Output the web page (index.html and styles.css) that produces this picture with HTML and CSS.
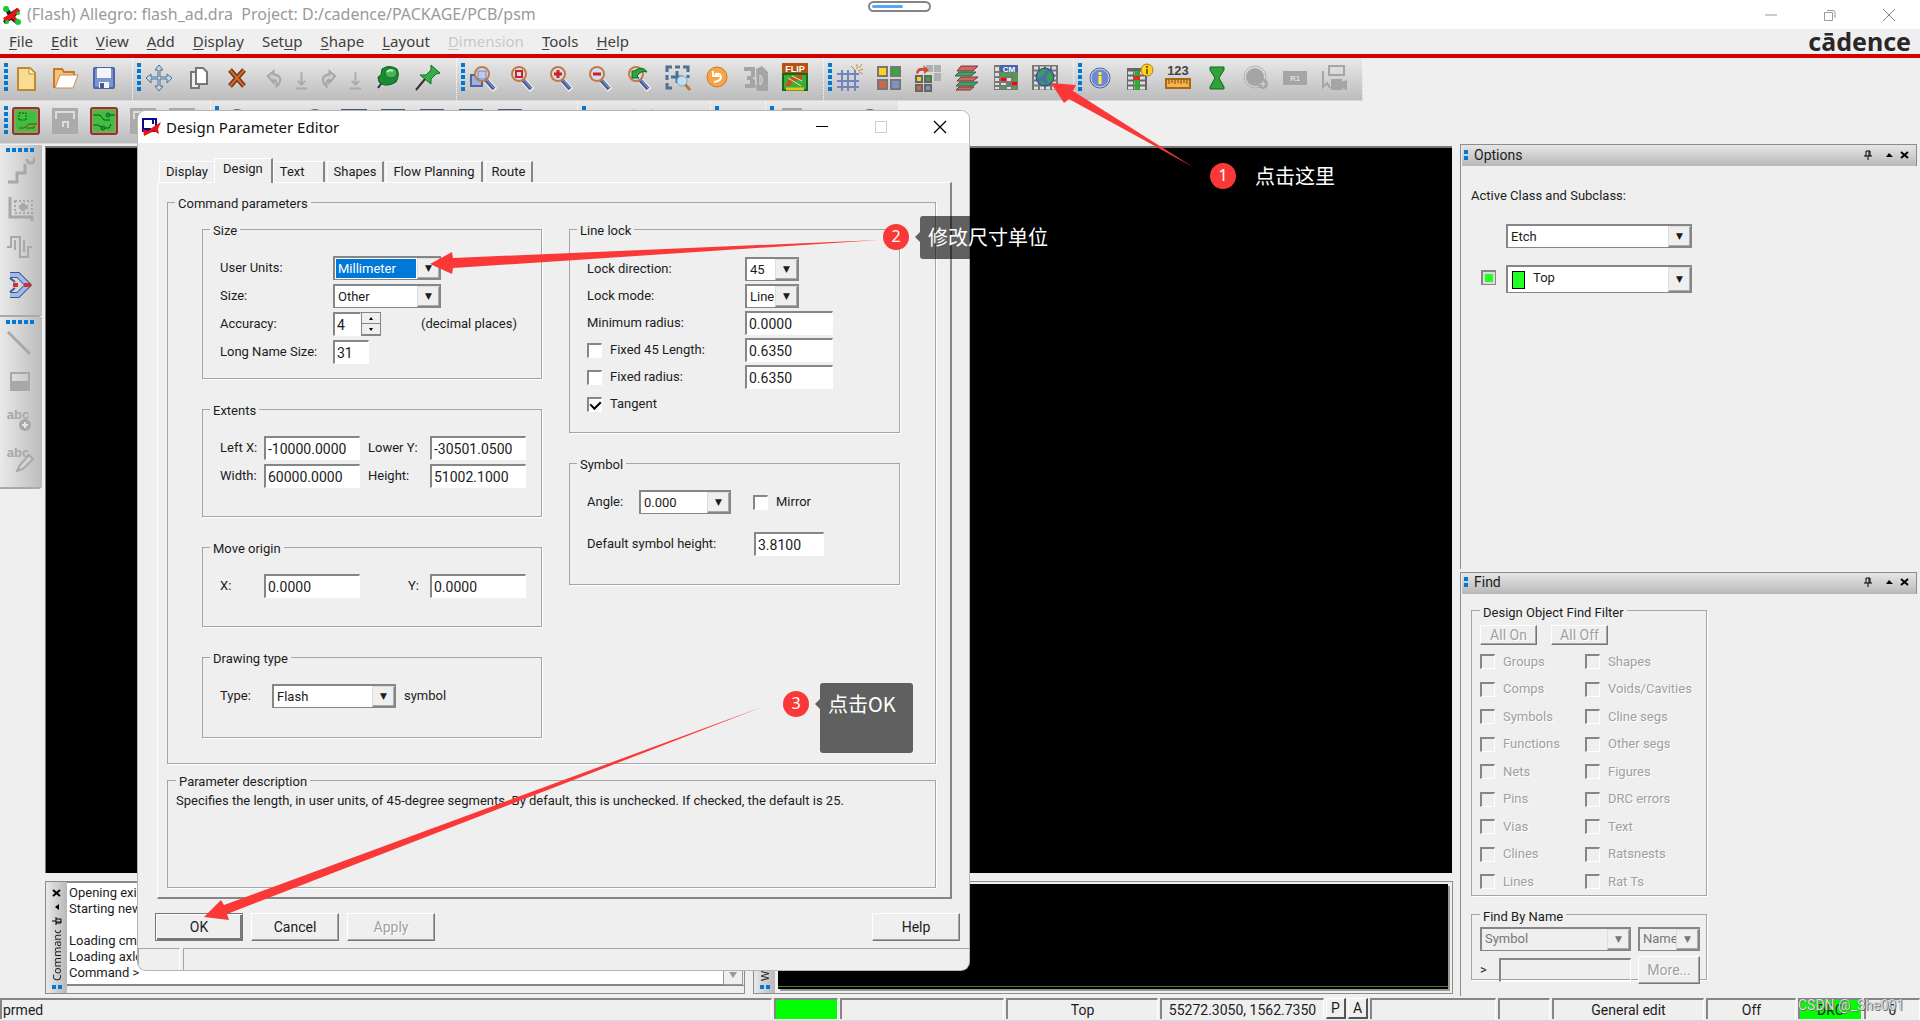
FILE: index.html
```html
<!DOCTYPE html>
<html lang="en">
<head>
<meta charset="utf-8">
<title>Allegro: flash_ad.dra</title>
<link rel="stylesheet" href="styles.css">
</head>
<body>
<svg class="defs" aria-hidden="true">
  <symbol id="lens" viewBox="0 0 30 30"><path d="M17 18l8 9" stroke="#f4f4f4" stroke-width="6"/><path d="M16 17l8 9" stroke="#4c5f94" stroke-width="4"/><path d="M17 17l7 8" stroke="#8fa3d6" stroke-width="1"/><circle cx="12" cy="11" r="7" fill="#d3dcf2" stroke="#c57a43" stroke-width="2"/></symbol>
  <symbol id="pin" viewBox="0 0 10 10"><path d="M3 1h4v5M3 1v5M1 6h8M5 6v4M6 1v5" fill="none" stroke="#000"/></symbol>
  <symbol id="x" viewBox="0 0 10 10"><path d="M1 2l7 6M8 2l-7 6" stroke="#000" stroke-width="2"/></symbol>
  <symbol id="disk" viewBox="0 0 30 30"><path d="M2 2h26v26H2z" fill="#ababab"/><path d="M6 13V6h18v7M13 21v-5h5v6" fill="none" stroke="#dcdcdc" stroke-width="2"/></symbol>
  <symbol id="board" viewBox="0 0 30 30"><rect x="2" y="2" width="26" height="26" rx="2" fill="#3fbf3f" stroke="#8f3535" stroke-width="2"/><rect x="4" y="4" width="22" height="22" fill="none" stroke="#e07a70"/></symbol>
  <symbol id="bluebar" viewBox="0 0 30 30"><path d="M4 7h22v16H4z" fill="#7f93c9" stroke="#44588f" stroke-width="2"/></symbol>
  <symbol id="graybar" viewBox="0 0 30 30"><path d="M6 6h18v18H6z" fill="none" stroke="#a5a5a5" stroke-width="2"/></symbol>
</svg>

<header class="titlebar">
  <svg class="app-icon" viewBox="0 0 20 20"><path d="M2 3h4l3 4 6-4 3 3-5 6 5 5-4 2-5-4-6 4-2-3 5-5z" fill="#222"/><path d="M1 13l7-4 8-6 2 3-6 5 5 5-4 1-3-4-6 5z" fill="#e11"/><circle cx="4" cy="4" r="3" fill="#1c3"/><circle cx="16" cy="8" r="2" fill="#1c3"/><circle cx="16" cy="17" r="3" fill="#1c3"/><circle cx="5" cy="17" r="2" fill="#1c3"/><path d="M4 14l8-6 4-4" stroke="#e11" stroke-width="3"/></svg>
  <h1>(Flash) Allegro: flash_ad.dra&nbsp; Project: D:/cadence/PACKAGE/PCB/psm</h1>
  <div class="pill"><i></i></div>
  <div class="win-controls">
    <button aria-label="Minimize"><svg viewBox="0 0 14 14"><path d="M1 7h12" stroke="#999"/></svg></button>
    <button aria-label="Restore"><svg viewBox="0 0 14 14"><path d="M1.500 4.500h8v8h-8zM4 2.500h6q2 0 2 2V10" fill="none" stroke="#999"/></svg></button>
    <button aria-label="Close"><svg viewBox="0 0 14 14"><path d="M1 1l12 12M13 1L1 13" stroke="#888"/></svg></button>
  </div>
</header>

<nav class="menubar">
  <a href="#"><u>F</u>ile</a><a href="#"><u>E</u>dit</a><a href="#"><u>V</u>iew</a><a href="#"><u>A</u>dd</a><a href="#"><u>D</u>isplay</a><a href="#">Set<u>u</u>p</a><a href="#"><u>S</u>hape</a><a href="#"><u>L</u>ayout</a><a href="#" class="off"><u>D</u>imension</a><a href="#"><u>T</u>ools</a><a href="#"><u>H</u>elp</a>
  <strong class="brand">c<span>ā</span>dence</strong>
</nav>

<div class="toolbar">
  <div class="group"><i class="grip"></i>
    <button aria-label="New"><svg viewBox="0 0 30 30"><path d="M7 5h12l5 5v17H7z" fill="#f8dc94" stroke="#c08a35" stroke-width="2"/><path d="M18 5v6h6" fill="#fff3cf" stroke="#c08a35"/></svg></button>
    <button aria-label="Open"><svg viewBox="0 0 30 30"><path d="M4 25V6h8l2 3h10v4" fill="#f5c27a" stroke="#c9772c" stroke-width="2"/><path d="M5 25l5-13h18l-5 13z" fill="#fff" stroke="#c98b50"/></svg></button>
    <button aria-label="Save"><svg viewBox="0 0 30 30"><rect x="5" y="5" width="20" height="20" rx="1" fill="#7d95cf" stroke="#4d65a5" stroke-width="2"/><path d="M8 5h14v10H8zM10 19h10v6H10z" fill="#f2f4fa"/><path d="M11 20h4v5h-4z" fill="#44598f"/></svg></button>
  </div>
  <div class="group"><i class="grip"></i>
    <button aria-label="Move"><svg viewBox="0 0 30 30"><path d="M15 2l4 5h-3v7h7v-3l5 4-5 5v-4h-7v7h3l-4 5-4-5h3v-7H7v4l-5-5 5-4v3h7V7h-3z" fill="#c7d6e6" stroke="#4d7192"/></svg></button>
    <button aria-label="Copy"><svg viewBox="0 0 30 30"><path d="M8 9h8v16H8z" fill="#eee" stroke="#777" stroke-width="2"/><path d="M13 5h7l4 4v12H13z" fill="#fff" stroke="#777" stroke-width="2"/></svg></button>
    <button aria-label="Delete"><svg viewBox="0 0 30 30"><path d="M8 7l14 16M22 7L8 23" stroke="#7b3410" stroke-width="5"/><path d="M8 7l14 16M22 7L8 23" stroke="#d06a2c" stroke-width="2"/></svg></button>
    <div class="history">
      <button aria-label="Undo"><svg viewBox="0 0 20 30"><path d="M3 13l6-5v3q8 1 7 7-1 4-4 6 1-7-3-7v3z" fill="#ccc" stroke="#a5a5a5" stroke-width="2"/></svg></button>
      <button aria-label="Undo list"><svg viewBox="0 0 20 30"><path d="M10 9v13M6 18l4 4 4-4M4 26h12" fill="none" stroke="#aaa" stroke-width="2"/></svg></button>
      <button aria-label="Redo"><svg viewBox="0 0 20 30"><path d="M17 13l-6-5v3q-8 1-7 7 1 4 4 6-1-7 3-7v3z" fill="#ccc" stroke="#a5a5a5" stroke-width="2"/></svg></button>
      <button aria-label="Redo list"><svg viewBox="0 0 20 30"><path d="M10 9v13M6 18l4 4 4-4M4 26h12" fill="none" stroke="#aaa" stroke-width="2"/></svg></button>
    </div>
    <button aria-label="Fix"><svg viewBox="0 0 30 30"><path d="M4 25l5-7" stroke="#333" stroke-width="2"/><path d="M8 6q7-5 15 0 3 6-1 13l-4 2q-8 3-13-2l-1-5 3-2z" fill="#1d8a34" stroke="#0c5c1e"/><ellipse cx="17" cy="10" rx="6" ry="5" fill="#45b557" stroke="#146d27"/><path d="M13 9q3-3 6-1" stroke="#b9edba" stroke-width="2" fill="none"/></svg></button>
    <button aria-label="Unfix"><svg viewBox="0 0 30 30"><path d="M3 27l9-11" stroke="#333" stroke-width="2"/><path d="M18 2l9 8-4 1-5 5v5L7 12h6l5-5z" fill="#39ad4b" stroke="#0f6f26"/></svg></button>
  </div>
  <div class="group"><i class="grip"></i>
    <button aria-label="Zoom window"><svg viewBox="0 0 30 30"><path d="M3 12h11v11H3z" fill="#9fb1de" stroke="#4f66a3" stroke-width="2"/><use href="#lens" x="2"/><path d="M10 8h8v8h-8z" fill="#bccaec" stroke="#6d83bb"/></svg></button>
    <button aria-label="Zoom fit"><svg viewBox="0 0 30 30"><use href="#lens"/><path d="M9 8h6v6H9z" fill="none" stroke="#c22" stroke-width="2"/></svg></button>
    <button aria-label="Zoom in"><svg viewBox="0 0 30 30"><use href="#lens"/><path d="M12 7v8M8 11h8" stroke="#c22" stroke-width="3"/></svg></button>
    <button aria-label="Zoom out"><svg viewBox="0 0 30 30"><use href="#lens"/><path d="M8 11h8" stroke="#c22" stroke-width="3"/></svg></button>
    <button aria-label="Zoom previous"><svg viewBox="0 0 30 30"><use href="#lens"/><path d="M8 8v7h7l-2-2q4-6 10-4-4-7-13-1z" fill="#2fa33a" stroke="#126a1c"/></svg></button>
    <button aria-label="Zoom selection"><svg viewBox="0 0 30 30"><path d="M4 9V4h5M12 4h5M20 4h5v5M4 12v5M25 12v3M4 20v5h5M14 8v12M8 14h12" fill="none" stroke="#4d7192" stroke-width="3"/><path d="M21 20l6 7" stroke="#b87a3a" stroke-width="3"/><circle cx="19" cy="18" r="5" fill="#bfe0f7" stroke="#7da7c9"/></svg></button>
    <button aria-label="Redraw"><svg viewBox="0 0 30 30"><circle cx="15" cy="14" r="10" fill="#f5a54a" stroke="#d27a1e"/><path d="M11 8v5h5l-2-2q5-1 5 3t-7 5" fill="none" stroke="#fff" stroke-width="2"/></svg></button>
    <button aria-label="3D view"><svg viewBox="0 0 30 30"><path d="M3 4h11v10l-3 1 3 2v8H4v-4h5v-4H6v-4h4V8H3zM15 6l6-3 6 6v19H16l-2-6h2z" fill="#a5a5a5"/><path d="M19 12v10q5-5 0-10" fill="#a5a5a5" stroke="#ddd"/></svg></button>
    <button aria-label="Flip"><svg viewBox="0 0 30 30"><path d="M3 11h24v16H3z" fill="#3cab3c" stroke="#17691a" stroke-width="2"/><path d="M8 23q1-8 12-8v-3" fill="none" stroke="#c9501a" stroke-width="4"/><path d="M8 15l13 8M12 13l10 5" stroke="#d9f0a0"/><path d="M6 26h18" stroke="#e6c51c" stroke-width="3"/><path d="M2 0h26v10H2z" fill="#b85014"/><text x="15" y="9" text-anchor="middle" font-size="9" font-weight="700" fill="#fff">FLIP</text></svg></button>
  </div>
  <div class="group"><i class="grip"></i>
    <button aria-label="Grid"><svg viewBox="0 0 30 30"><path d="M7 7v21M13 7v21M20 7v21M2 11h22M2 18h22M2 24h22" stroke="#6f86bf" stroke-width="2"/><path d="M23 8l5-2M22 6V1M20 7l-4-4M24 9l4 2M24 5l3-4" stroke="#d08a35"/></svg></button>
    <button aria-label="Colors"><svg viewBox="0 0 30 30" stroke="#777" stroke-width="2"><path d="M4 4h9v9H4z" fill="#ffd21f"/><path d="M17 4h9v9h-9z" fill="#36a836"/><path d="M4 17h9v9H4z" fill="#c9684b"/><path d="M17 17h9v9h-9z" fill="#7e92c7"/></svg></button>
    <button aria-label="Shadow colors"><svg viewBox="0 0 30 30"><path d="M13 2h7v7h-7zM21 2h7v7h-7zM21 10h7v8h-7z" fill="#b0b0b0"/><path d="M3 10q1-6 8-5l-1-3 6 5-5 4V8Q6 7 5 11z" fill="#cf4a3a"/><g stroke="#666" stroke-width="2"><path d="M3 13h6v6H3z" fill="#ffd21f"/><path d="M12 13h6v6h-6z" fill="#36a836"/><path d="M3 22h6v6H3z" fill="#c9684b"/><path d="M12 22h6v6h-6z" fill="#7e92c7"/></g></svg></button>
    <button aria-label="Cross-section"><svg viewBox="0 0 30 30"><path d="M9 3h17l-5 5H5z" fill="#c86b62" stroke="#833" /><path d="M7 9h17l-5 4H3z" fill="#47a35a" stroke="#265" /><path d="M9 14h17l-5 4H5z" fill="#c86b62" stroke="#833"/><path d="M8 19h18l-5 4H4z" fill="#47a35a" stroke="#265"/><path d="M7 24h15l-4 3H4z" fill="#c86b62" stroke="#833"/></svg></button>
    <button aria-label="Constraint manager"><svg viewBox="0 0 30 30"><path d="M3 2h24v25H3z" fill="#777"/><path d="M4 4h4v4H4zM4 10h4v3H4zM4 15h4v3H4zM4 20h4v2H4zM4 24h4v2H4zM16 15h4v3h-4zM10 20h5v2h-5zM16 24h4v2h-4z" fill="#ddd"/><path d="M10 10h5v3h-5zM22 10h4v3h-4zM10 24h5v2h-5zM22 15h4v3h-4zM16 10h4v3h-4zM22 24h4v2h-4z" fill="#36b336"/><path d="M10 15h5v3h-5zM21 19h5v3h-5z" fill="#f00"/><path d="M9 2h18v7H9z" fill="#4765a8"/><text x="18" y="9" text-anchor="middle" font-size="8" font-weight="700" fill="#fff">CM</text></svg></button>
    <button aria-label="Design parameters"><svg viewBox="0 0 30 30"><path d="M2 2h26v25H2z" fill="#777"/><path d="M4 5h22M4 10h22M4 15h22M4 20h22M4 25h22" stroke="#ddd" stroke-width="3" stroke-dasharray="4 2"/><circle cx="15" cy="14" r="9" fill="#4a6fae" stroke="#2c4880"/><path d="M8 10q5-6 8-3l-2 4-3 3-3 1zM18 9l4 2 1 5-4 5-3-5zM10 18l3 0 2 3-3 1z" fill="#39a04f"/></svg></button>
  </div>
  <div class="group"><i class="grip"></i>
    <button aria-label="Show element"><svg viewBox="0 0 30 30"><circle cx="15" cy="15" r="10" fill="#7089cc" stroke="#445fa5"/><circle cx="15" cy="15" r="9" fill="none" stroke="#c7d3f0"/><path d="M15 9v3M15 13v8" stroke="#ffee33" stroke-width="3"/></svg></button>
    <button aria-label="Report"><svg viewBox="0 0 30 30"><path d="M3 5h20v22H3z" fill="#666"/><path d="M4 10h18M4 15h18M4 20h18M4 25h18" stroke="#ddd" stroke-width="3" stroke-dasharray="5 1"/><path d="M13 8v19" stroke="#36a836" stroke-width="5"/><path d="M10 13h6v4h-6z" fill="#e22"/><circle cx="23" cy="7" r="6" fill="#ffd21f" stroke="#b07a10"/><path d="M23 3v2M23 6v5" stroke="#865b00" stroke-width="2"/></svg></button>
    <button aria-label="Measure"><svg viewBox="0 0 30 30"><text x="15" y="12" text-anchor="middle" font-size="13" font-weight="700" fill="#444">123</text><path d="M3 16h24v9H3z" fill="#f4b44c" stroke="#a86716" stroke-width="2"/><path d="M6 17v4M9 17v3M12 17v4M15 17v3M18 17v4M21 17v3M24 17v4" stroke="#7a4308"/></svg></button>
    <button aria-label="Waive"><svg viewBox="0 0 30 30"><path d="M8 4h14v3l-5 8 5 9v2H8v-2l5-9-5-8z" fill="#2fa33a" stroke="#14661e"/></svg></button>
    <button aria-label="Add marker"><svg viewBox="0 0 30 30"><circle cx="14" cy="14" r="11" fill="none" stroke="#b0b0b0"/><circle cx="14" cy="14" r="9" fill="#a5a5a5"/><circle cx="22" cy="21" r="5" fill="#a5a5a5"/><path d="M22 18v6M19 21h6" stroke="#ddd"/></svg></button>
    <button aria-label="Value"><svg viewBox="0 0 30 30"><path d="M3 8h24v14H3z" fill="#a5a5a5"/><text x="15" y="18" text-anchor="middle" font-size="8" font-weight="700" fill="#ddd">R1</text></svg></button>
    <button aria-label="Snapshot"><svg viewBox="0 0 30 30"><path d="M10 3h15v9H10zM4 8v16l4-4 3 5" fill="none" stroke="#a5a5a5" stroke-width="2"/><path d="M12 16h11v11H12zM22 19l6-2v10l-6-2z" fill="#a5a5a5"/></svg></button>
  </div>
</div>

<div class="toolbar">
  <div class="group"><i class="grip"></i>
    <button aria-label="General edit"><svg viewBox="0 0 30 30"><use href="#board"/><path d="M8 7h7v7H8z" fill="none" stroke="#164f16" stroke-dasharray="2 1"/><path d="M8 22h5l5-4h8M15 22h8v-2" fill="none" stroke="#7a3a1a"/></svg></button>
    <button aria-label="Placement edit"><svg viewBox="0 0 30 30"><use href="#disk"/></svg></button>
    <button aria-label="Etch edit"><svg viewBox="0 0 30 30"><use href="#board"/><path d="M4 9h7l4 5h6M4 19h5l5 3h6l2-4M18 9h8" fill="none" stroke="#164f16"/><circle cx="19" cy="9" r="2" fill="#2f8f2f" stroke="#163"/><circle cx="14" cy="22" r="2" fill="#2f8f2f" stroke="#163"/></svg></button>
    <button aria-label="Signal mode"><svg viewBox="0 0 30 30"><use href="#disk"/></svg></button>
    <button aria-label="Shape edit"><svg viewBox="0 0 30 30"><use href="#disk"/></svg></button>
  </div>
  <div class="group"><i class="grip"></i>
    <button aria-label="Shape 1"><svg viewBox="0 0 30 30"><circle cx="15" cy="13" r="9" fill="#7f93c9" stroke="#44588f" stroke-width="2"/></svg></button>
    <button aria-label="Shape 2"><svg viewBox="0 0 30 30"></svg></button>
    <button aria-label="Shape 3"><svg viewBox="0 0 30 30"><circle cx="15" cy="13" r="9" fill="#7f93c9" stroke="#44588f" stroke-width="2"/></svg></button>
    <button aria-label="Shape 4"><svg viewBox="0 0 30 30"><path d="M3 4h24v20H3z" fill="#fff" stroke="#44588f" stroke-width="2"/></svg></button>
    <button aria-label="Shape 5"><svg viewBox="0 0 30 30"><use href="#bluebar" y="-3"/></svg></button>
    <button aria-label="Shape 6"><svg viewBox="0 0 30 30"><use href="#bluebar" y="-3"/></svg></button>
    <button aria-label="Shape 7"><svg viewBox="0 0 30 30"><use href="#bluebar" y="-3"/></svg></button>
    <button aria-label="Shape 8"><svg viewBox="0 0 30 30"><use href="#bluebar" y="-3"/></svg></button>
    <button aria-label="Shape 9"><svg viewBox="0 0 30 30"></svg></button>
  </div>
  <div class="group"><i class="grip"></i>
    <button aria-label="Dimension 1"><svg viewBox="0 0 30 30"><path d="M12 4h6v16h-6z" fill="#aaa"/></svg></button>
    <button aria-label="Dimension 2"><svg viewBox="0 0 30 30"><path d="M6 3v20M24 3v20" stroke="#aaa"/></svg></button>
    <button aria-label="Dimension 3"><svg viewBox="0 0 30 30"></svg></button>
  </div>
  <div class="group"><i class="grip"></i><button aria-label="Drill"><svg viewBox="0 0 30 30"></svg></button></div>
  <div class="group"><i class="grip"></i>
    <button aria-label="Output 1"><svg viewBox="0 0 30 30"><use href="#graybar" y="-3"/></svg></button>
    <button aria-label="Output 2"><svg viewBox="0 0 30 30"></svg></button>
    <button aria-label="Output 3"><svg viewBox="0 0 30 30"><circle cx="15" cy="13" r="9" fill="#c7d3ea" stroke="#44588f" stroke-width="2"/></svg></button>
  </div>
</div>

<main class="workspace">
  <aside class="rail">
    <div class="rail-group"><i class="grip"></i>
      <button aria-label="Add connect"><svg viewBox="0 0 30 30"><path d="M3 26h9v-9h8V8M22 3q0 4 4 4t4-6" fill="none" stroke="#a8a8a8" stroke-width="3"/></svg></button>
      <button aria-label="Slide"><svg viewBox="0 0 30 30"><path d="M5 3v20h22v4" fill="none" stroke="#a8a8a8" stroke-width="3"/><path d="M10 7h17v12H10z" fill="none" stroke="#a8a8a8" stroke-width="2" stroke-dasharray="2 2"/><path d="M18 9v8M14 13h9" stroke="#a8a8a8" stroke-width="4"/></svg></button>
      <button aria-label="Delay tune"><svg viewBox="0 0 30 30"><path d="M2 15h4V5h9v20h8V15h4M10 8v10M19 8v12" fill="none" stroke="#a8a8a8" stroke-width="2"/></svg></button>
      <button aria-label="Custom smooth"><svg viewBox="0 0 30 30"><path d="M5 5h8l10 10-10 10H5" fill="none" stroke="#3e5795" stroke-width="6"/><path d="M5 5h8l10 10-10 10H5" fill="none" stroke="#a3b9ea" stroke-width="4"/><path d="M5 8l5 4M5 22l5-4" fill="none" stroke="#3e5795" stroke-width="2"/><path d="M8 15h5M19 15h7" stroke="#c33" stroke-width="4"/></svg></button>
    </div>
    <div class="rail-group"><i class="grip"></i>
      <button aria-label="Add line"><svg viewBox="0 0 30 30"><path d="M3 4l22 22" stroke="#a8a8a8" stroke-width="3"/></svg></button>
      <button aria-label="Add rectangle"><svg viewBox="0 0 30 30"><path d="M6 7h18v17H6z" fill="none" stroke="#a8a8a8" stroke-width="2"/><path d="M6 15h18v9H6z" fill="#a8a8a8"/></svg></button>
      <button aria-label="Add text"><svg viewBox="0 0 30 30"><text x="13" y="15" text-anchor="middle" font-size="13" font-weight="700" fill="#a8a8a8">abc</text><circle cx="20" cy="21" r="6" fill="#a8a8a8"/><path d="M20 18v6M17 21h6" stroke="#e5e5e5" stroke-width="2"/></svg></button>
      <button aria-label="Edit text"><svg viewBox="0 0 30 30"><text x="13" y="15" text-anchor="middle" font-size="13" font-weight="700" fill="#a8a8a8">abc</text><path d="M24 13l-9 10-3 6 6-2 10-10z" fill="#d5d5d5" stroke="#a8a8a8" stroke-width="2"/></svg></button>
    </div>
  </aside>

  <section class="center">
    <div class="canvas"></div>
    <div class="docks">
      <section class="dock command">
        <header class="dock-side"><svg viewBox="0 0 10 10"><use href="#x"/></svg><svg viewBox="0 0 10 10"><path d="M7 2v6L3 5z"/></svg><svg class="turned" viewBox="0 0 10 10"><use href="#pin"/></svg><h2>Command</h2><i class="pair"></i></header>
        <pre class="log">Opening existing design...
Starting new design...

Loading cmds.cxt
Loading axlcore.cxt
Command &gt;</pre>
        <div class="scroll"><i></i></div>
      </section>
      <section class="dock">
        <header class="dock-side"><h2>WorldView</h2><i class="pair"></i></header>
        <div class="world"></div>
      </section>
    </div>
  </section>

  <aside class="panels">
    <section class="panel">
      <header class="panel-head"><i class="pair"></i><h2>Options</h2><svg viewBox="0 0 10 10"><use href="#pin"/></svg><svg class="gap" viewBox="0 0 10 10"><path d="M2 7h7L5 3z"/></svg><svg viewBox="0 0 10 10"><use href="#x"/></svg></header>
      <div class="options">
        <p>Active Class and Subclass:</p>
        <div class="combo wide"><select aria-label="Class"><option>Etch</option></select></div>
        <div class="layer"><input type="checkbox" class="visible" aria-label="Visible"><div class="combo wide tall"><i class="swatch"></i><select aria-label="Subclass"><option>Top</option></select></div></div>
      </div>
    </section>
    <section class="panel">
      <header class="panel-head"><i class="pair"></i><h2>Find</h2><svg viewBox="0 0 10 10"><use href="#pin"/></svg><svg class="gap" viewBox="0 0 10 10"><path d="M2 7h7L5 3z"/></svg><svg viewBox="0 0 10 10"><use href="#x"/></svg></header>
      <div class="find">
        <fieldset class="filter">
          <legend>Design Object Find Filter</legend>
          <div class="all"><button class="btn small" disabled>All On</button><button class="btn small" disabled>All Off</button></div>
          <div class="checks">
            <label><input type="checkbox" disabled>Groups</label><label><input type="checkbox" disabled>Shapes</label>
            <label><input type="checkbox" disabled>Comps</label><label><input type="checkbox" disabled>Voids/Cavities</label>
            <label><input type="checkbox" disabled>Symbols</label><label><input type="checkbox" disabled>Cline segs</label>
            <label><input type="checkbox" disabled>Functions</label><label><input type="checkbox" disabled>Other segs</label>
            <label><input type="checkbox" disabled>Nets</label><label><input type="checkbox" disabled>Figures</label>
            <label><input type="checkbox" disabled>Pins</label><label><input type="checkbox" disabled>DRC errors</label>
            <label><input type="checkbox" disabled>Vias</label><label><input type="checkbox" disabled>Text</label>
            <label><input type="checkbox" disabled>Clines</label><label><input type="checkbox" disabled>Ratsnests</label>
            <label><input type="checkbox" disabled>Lines</label><label><input type="checkbox" disabled>Rat Ts</label>
          </div>
        </fieldset>
        <fieldset class="byname">
          <legend>Find By Name</legend>
          <div class="combo off"><select aria-label="Object type" disabled><option>Symbol</option></select></div>
          <div class="combo off"><select aria-label="Match by" disabled><option>Name</option></select></div>
          <div class="query"><label for="q">&gt;</label><input id="q" class="field" disabled></div>
          <button class="btn more" disabled>More...</button>
        </fieldset>
      </div>
    </section>
  </aside>
</main>

<footer class="status">
  <span class="grow">prmed</span><span class="w64 green"></span><span class="w164"></span><span class="w152">Top</span><span class="w164">55272.3050, 1562.7350</span><button>P</button><button>A</button><span class="w126"></span><span class="w52"></span><span class="w152">General edit</span><span class="w90">Off</span><span class="w64 green">DRC</span><span class="w56">0</span>
</footer>

<section class="dialog" role="dialog" aria-labelledby="dlg-title">
  <header class="dialog-title">
    <svg viewBox="0 0 20 20"><path d="M2 2h13v12H2z" fill="#fff" stroke="#0a0a8c" stroke-width="2"/><path d="M2 12h8M12 3v4" stroke="#0a0a8c" stroke-width="2"/><path d="M2 12l5 2 5-4 8-5-3 7 1 5-5-3-4 2-6 3z" fill="#e11"/></svg>
    <h2 id="dlg-title">Design Parameter Editor</h2>
    <button aria-label="Minimize"><svg viewBox="0 0 14 14"><path d="M1 6.500h12" stroke="#000"/></svg></button>
    <button aria-label="Maximize" disabled><svg viewBox="0 0 14 14"><path d="M1.500 1.500h11v11h-11z" fill="none" stroke="#ccc"/></svg></button>
    <button aria-label="Close"><svg viewBox="0 0 14 14"><path d="M1 1l12 12M13 1L1 13" stroke="#000" stroke-width="1.300"/></svg></button>
  </header>
  <div class="dialog-body">
    <div class="tabs" role="tablist">
      <button role="tab">Display</button><button role="tab" class="on" aria-selected="true">Design</button><button role="tab" class="text-tab">Text</button><button role="tab">Shapes</button><button role="tab">Flow Planning</button><button role="tab">Route</button>
    </div>
    <div class="pane">
      <fieldset class="params">
        <legend>Command parameters</legend>
        <div class="col">
          <fieldset class="size">
            <legend>Size</legend>
            <label for="units">User Units:</label><div class="combo selected w108"><select id="units"><option>Millimeter</option></select></div>
            <label for="size">Size:</label><div class="combo w108"><select id="size"><option>Other</option></select></div>
            <label for="acc">Accuracy:</label><div class="accuracy"><input id="acc" class="field w28" value="4"><span class="spin"><button aria-label="Increase"></button><button aria-label="Decrease"></button></span><span>(decimal places)</span></div>
            <label for="long">Long Name Size:</label><input id="long" class="field w36" value="31">
          </fieldset>
          <fieldset class="xy">
            <legend>Extents</legend>
            <label for="lx">Left X:</label><input id="lx" class="field" value="-10000.0000"><label for="ly">Lower Y:</label><input id="ly" class="field" value="-30501.0500">
            <label for="wd">Width:</label><input id="wd" class="field" value="60000.0000"><label for="ht">Height:</label><input id="ht" class="field" value="51002.1000">
          </fieldset>
          <fieldset class="xy">
            <legend>Move origin</legend>
            <label for="mx">X:</label><input id="mx" class="field" value="0.0000"><label for="my" class="end">Y:</label><input id="my" class="field" value="0.0000">
          </fieldset>
          <fieldset class="drawing">
            <legend>Drawing type</legend>
            <label for="type">Type:</label><div class="combo"><select id="type"><option>Flash</option></select></div><span>symbol</span>
          </fieldset>
        </div>
        <div class="col">
          <fieldset class="lock">
            <legend>Line lock</legend>
            <label for="dir">Lock direction:</label><div class="combo w54"><select id="dir"><option>45</option></select></div>
            <label for="mode">Lock mode:</label><div class="combo w54"><select id="mode"><option>Line</option></select></div>
            <label for="minr">Minimum radius:</label><input id="minr" class="field w88" value="0.0000">
            <label><input type="checkbox">Fixed 45 Length:</label><input class="field w88" aria-label="Fixed length" value="0.6350">
            <label><input type="checkbox">Fixed radius:</label><input class="field w88" aria-label="Fixed radius value" value="0.6350">
            <label><input type="checkbox" checked>Tangent</label>
          </fieldset>
          <fieldset class="symbol">
            <legend>Symbol</legend>
            <div><label for="ang">Angle:</label><div class="combo"><select id="ang"><option>0.000</option></select></div><label><input type="checkbox">Mirror</label></div>
            <div><label for="sh">Default symbol height:</label><input id="sh" class="field" value="3.8100"></div>
          </fieldset>
        </div>
      </fieldset>
      <fieldset class="description">
        <legend>Parameter description</legend>
        <p>Specifies the length, in user units, of 45-degree segments. By default, this is unchecked. If checked, the default is 25.</p>
      </fieldset>
    </div>
    <div class="actions"><button class="btn default">OK</button><button class="btn">Cancel</button><button class="btn" disabled>Apply</button><button class="btn help">Help</button></div>
  </div>
  <footer class="dialog-status"><span></span><span></span></footer>
</section>

<svg class="arrows" aria-hidden="true">
  <path d="M1051 83l25 2-3 6 120 76-124-68-5 4z"/>
  <path d="M430 264l22-12 1 6 426-18-426 28-1 6z"/>
  <path d="M204 917l17-17 3 5L770 704 227 914l2 6z"/>
</svg>
<div class="note one"><b>1</b><span>点击这里</span></div>
<div class="note two"><b>2</b><span>修改尺寸单位</span></div>
<div class="note three"><b>3</b><span>点击OK</span></div>
<div class="credit">CSDN @_She001</div>
</body>
</html>
```
FILE: styles.css
```css
:root { --face: #efefef; --dark: #868686; --mid: #a5a5a5; --blue: #0078d7; --red: #fb3838; }
* { box-sizing: border-box; }
body { margin: 0; height: 100vh; display: flex; flex-direction: column; position: relative; overflow: hidden; background: var(--face); color: #1c1c1c; font: 13px/16px Roboto, "Liberation Sans", sans-serif; }
button, input, select { font: inherit; color: inherit; }
button { padding: 0; border: 0; background: none; }
h1, h2, p { margin: 0; font-weight: 400; font-size: inherit; }
svg text { font-family: "Liberation Sans", sans-serif; }
.defs { display: none; }

/* title bar and menu */
.titlebar { height: 29px; flex: none; display: flex; align-items: center; background: #fff; }
.app-icon { width: 20px; height: 20px; margin: 0 5px 0 2px; }
.titlebar h1 { padding-bottom: 2px; font: 16px/20px "Noto Sans", sans-serif; color: #9a9a9a; }
.win-controls { margin-left: auto; padding-right: 2px; display: flex; }
.win-controls button { width: 59px; height: 28px; }
.win-controls svg, .dialog-title button svg { width: 14px; height: 14px; display: block; margin: auto; }
.pill { position: absolute; left: 50%; top: 1px; margin-left: -92px; width: 63px; height: 11px; border: 2px solid #858585; border-radius: 6px; padding: 2px; background: #fff; }
.pill i { display: block; width: 31px; height: 3px; border-radius: 2px; background: #58a6f8; }
.menubar { height: 29px; flex: none; display: flex; gap: 18px; align-items: center; padding: 0 9px 2px; border-bottom: 4px solid #d40000; font: 15px/20px "Noto Sans", sans-serif; }
.menubar a { color: #404040; text-decoration: none; }
.menubar u { text-underline-offset: 2px; }
.menubar .off { color: #c8c8c8; }
.brand { margin-left: auto; font-size: 25px; line-height: 24px; color: #2b2627; }
.brand span { color: transparent; background: linear-gradient(#e33 7px, #2b2627 7px); background-clip: text; -webkit-background-clip: text; }

/* toolbars */
.toolbar { display: flex; height: 43px; flex: none; }
.group { display: flex; gap: 9px; align-items: flex-start; padding: 5px 13px 0 0; background: linear-gradient(#e9e9e9, #bcbcbc); border-bottom: 1px solid #d8d8d8; border-right: 1px dotted #fff; }
.group button, .group > button svg { width: 30px; height: 30px; display: block; }
.group .grip { width: 11px; height: 30px; margin-right: -9px; background: repeating-linear-gradient(var(--blue) 0 4px, transparent 4px 6px) 4px 0 / 4px 28px no-repeat; }
.history { display: flex; gap: 8px; padding-left: 4px; }
.group .history button, .history svg { width: 19px; height: 30px; display: block; }

/* workspace */
.workspace { flex: 1; min-height: 0; display: flex; }
.rail { width: 45px; flex: none; padding-top: 1px; }
.rail-group { width: 42px; height: 172px; padding: 3px 0 0 5px; background: linear-gradient(90deg, #e9e9e9, #bcbcbc); border-bottom: 2px solid #aaa; border-radius: 0 0 4px 0; }
.rail-group .grip { display: block; height: 4px; width: 28px; margin-left: 1px; background: repeating-linear-gradient(90deg, var(--blue) 0 4px, transparent 4px 6px); }
.rail-group button { display: block; width: 30px; height: 38px; }
.rail-group svg { width: 30px; height: 30px; display: block; margin: auto; }
.center { flex: 1; min-width: 0; display: flex; flex-direction: column; gap: 8px; padding: 2px 0 4px; }
.canvas { flex: 1; background: #000; border: solid #777; border-width: 2px 0 0 1px; margin-right: 1px; }
.docks { height: 113px; display: flex; gap: 8px; }
.dock { flex: 1; min-width: 0; display: flex; border: 1px solid #8c8c8c; }
.dock-side { width: 21px; display: flex; flex-direction: column; align-items: center; gap: 4px; padding: 6px 0 4px; background: linear-gradient(90deg, #e9e9e9, #b8b8b8); }
.dock-side svg { width: 10px; height: 10px; flex: none; }
.dock-side .turned { transform: rotate(90deg); }
.dock-side h2 { flex: 1; min-height: 0; overflow: hidden; writing-mode: vertical-rl; transform: rotate(180deg); font: 11px/16px "Noto Sans", sans-serif; }
.pair { flex: none; width: 10px; height: 4px; background: linear-gradient(90deg, var(--blue) 4px, transparent 4px 6px, var(--blue) 6px); }
.log { flex: 1; margin: 0 0 7px; padding: 2px; background: #fff; border: solid var(--dark); border-width: 1px 0 2px; font: inherit; overflow: hidden; }
.scroll { width: 21px; margin-bottom: 7px; display: flex; align-items: flex-end; border-bottom: 1px solid var(--dark); }
.scroll i { width: 20px; height: 20px; display: grid; place-items: center; border: 1px solid #999; }
.scroll i::after { content: ""; border: 4px solid transparent; border-top: 6px solid #999; border-bottom: 0; }
.world { flex: 1; margin: 2px 4px 4px 3px; background: #000 linear-gradient(#4d7a2a, #4d7a2a) 0 102px / 100% 1px no-repeat; box-shadow: 2px 2px 0 #999; }

/* side panels */
.panels { width: 460px; flex: none; margin-left: 7px; padding: 0 3px 2px 0; display: flex; flex-direction: column; gap: 3px; }
.panel { flex: 1; border-left: 1px solid #8c8c8c; border-top: 1px solid #8c8c8c; padding-left: 1px; }
.panel-head { height: 21px; display: flex; align-items: center; gap: 6px; padding: 0 6px 2px 2px; background: linear-gradient(#e6e6e6, #b8b8b8); border-right: 1px solid #8c8c8c; }
.panel-head .pair { width: 4px; height: 10px; background: linear-gradient(var(--blue) 4px, transparent 4px 6px, var(--blue) 6px); }
.panel-head h2 { flex: 1; font-size: 14px; }
.panel-head svg { width: 10px; height: 10px; }
.panel-head .gap { margin-left: 5px; }
.options { padding: 22px 9px; }
.options .wide { width: 186px; }
.options > .combo { margin: 20px 0 17px 35px; }
.layer { display: flex; gap: 10px; padding-left: 10px; }
.options .tall { height: 28px; position: relative; }
.combo.tall select { padding: 0 0 4px 24px; }
.swatch { position: absolute; left: 4px; top: 4px; width: 13px; height: 18px; background: #2f2; border: 1px solid #000; }
.layer input.visible { background: #2f2; border-color: var(--dark); box-shadow: inset 0 0 0 2px #ddd; margin-top: 5px; }
.find { padding: 9px 0 0 9px; width: 245px; display: grid; gap: 11px; }
.filter { padding: 6px 8px 1px; }
.all { display: flex; gap: 14px; }
.checks { display: grid; grid-template-columns: 105px 1fr; align-content: space-between; height: 244px; margin-top: 5px; color: #a0a0a0; text-shadow: 1px 1px #fff; }
.byname { display: grid; grid-template-columns: 151px 62px; gap: 5px 7px; padding: 4px 0 0 8px; height: 73px; }
.query { display: flex; justify-content: space-between; align-items: center; }
.query .field { width: 132px; background: none; }
.btn.more { width: 62px; background: var(--face); }

/* form controls */
fieldset { margin: 0; min-width: 0; padding: 0; border: 1px solid var(--mid); box-shadow: 1px 1px #fff; }
legend { padding: 2px 3px 0; height: 16px; }
label { white-space: nowrap; }
.field { width: 96px; height: 24px; min-width: 0; padding: 0 2px; border: solid; border-width: 2px 1px 1px 2px; border-color: var(--dark) #fff #fff var(--dark); border-radius: 0; background: #fff; font-size: 14px; }
.combo { display: flex; height: 24px; padding: 1px; background: #fff; border: solid var(--dark); border-width: 2px 1px 1px 2px; outline: 0; }
.combo select { flex: 1; min-width: 0; appearance: none; border: 0; border-radius: 0; padding: 0 0 0 2px; background: none; opacity: 1; }
.combo::after { content: "▼"; width: 21px; margin: -1px; display: grid; place-items: center; background: var(--face); border: 1px solid; border-color: #ddd var(--dark) var(--dark) #ddd; box-shadow: inset -1px -1px #aaa; font: 9px/9px "DejaVu Sans", sans-serif; }
.combo.selected select { background: var(--blue); color: #fff; margin-right: 2px; }
.combo.off { background: var(--face); color: #777; }
input[type="checkbox"] { appearance: none; flex: none; width: 15px; height: 15px; margin: 0; border: solid; border-width: 2px 1px 1px 2px; border-color: var(--dark) #fff #fff var(--dark); background: #fff; }
input[type="checkbox"]:disabled { background: none; }
input[type="checkbox"]:checked { display: grid; place-items: center; }
input[type="checkbox"]:checked::after { content: ""; width: 5px; height: 8px; margin-bottom: 3px; border: solid #000; border-width: 0 2px 2px 0; transform: rotate(45deg); }
label:has(input) { display: flex; align-items: center; gap: 8px; height: 24px; }
.btn { width: 88px; height: 28px; background: var(--face); border: 1px solid; border-color: #fff #777 #777 #fff; box-shadow: inset -1px -1px var(--mid); font-size: 14px; }
.btn:disabled { color: #a0a0a0; text-shadow: 1px 1px #fff; }
.btn.small { width: 57px; height: 20px; }
.btn.default { border: 1px solid #777; box-shadow: inset 1px 1px #fff, inset -2px -2px #777; }

/* dialog */
.dialog { position: absolute; left: 138px; top: 111px; width: 831px; background: var(--face); border-radius: 8px; overflow: hidden; box-shadow: 0 0 0 1px #b5b5b5; }
.dialog-title { height: 32px; display: flex; align-items: center; background: #fff; padding-left: 3px; }
.dialog-title > svg { width: 20px; height: 20px; margin-right: 5px; }
.dialog-title h2 { flex: 1; padding-bottom: 1px; font: 15px/20px "Noto Sans", sans-serif; color: #111; }
.dialog-title button { width: 59px; height: 32px; }
.dialog-body { padding: 15px 17px 7px 19px; }
.tabs { display: flex; align-items: flex-end; padding-left: 2px; }
.tabs button { height: 21px; margin-right: 2px; padding: 0 6px; background: var(--face); border: solid; border-width: 1px 2px 0 1px; border-color: #fff var(--dark) #fff #fff; }
.tabs button:first-child { border-right: 0; margin: 0; }
.tabs .on { height: 25px; margin: 0 0 -1px; padding: 0 8px 4px; }
.tabs .text-tab { padding-right: 18px; }
.pane { border: solid; border-width: 1px 2px 2px 1px; border-color: #fff var(--dark) var(--dark) #fff; padding: 11px 14px 9px 9px; display: grid; gap: 8px; }
.params { display: grid; grid-template-columns: 340px 331px; gap: 27px; padding: 11px 34px 25px; }
.params > legend { margin-left: -27px; }
.col { display: flex; flex-direction: column; gap: 22px; }
.col fieldset { padding: 19px 14px 14px 17px; }
.col legend { margin-left: -10px; }
.size { display: grid; grid-template-columns: 113px 1fr; gap: 4px 0; align-items: center; }
.w108 { width: 108px; }
.w28 { width: 28px; }
.w36 { width: 36px; }
.w54 { width: 54px; }
.w88 { width: 88px; }
.accuracy { display: flex; align-items: center; height: 24px; }
.spin { display: grid; width: 20px; margin-right: 40px; border: 1px solid var(--dark); }
.spin button { height: 11px; display: grid; place-items: center; border-bottom: 1px solid var(--dark); }
.spin button::after { content: ""; border: 2px solid transparent; border-bottom: 3px solid #000; border-top: 0; }
.spin button + button::after { border-top: 3px solid #000; border-bottom: 0; }
.xy { display: grid; grid-template-columns: 44px 96px 70px 96px; gap: 4px 0; align-items: center; }
.col .xy { padding-bottom: 28px; }
.xy label:nth-of-type(even) { padding-left: 8px; }
.xy .end { text-align: right; padding-right: 11px; }
.drawing { display: flex; align-items: center; gap: 8px; }
.col .drawing { padding-bottom: 29px; }
.drawing label { width: 44px; }
.drawing .combo { width: 124px; }
.lock { display: grid; grid-template-columns: 158px 1fr; grid-auto-rows: 24px; gap: 3px 0; align-items: center; }
.col .lock { padding-top: 20px; padding-bottom: 16px; }
.symbol { display: grid; gap: 18px; }
.col .symbol { padding-bottom: 28px; }
.symbol > div { display: flex; align-items: center; }
.symbol .combo { width: 92px; margin-right: 22px; }
.symbol label:first-child { width: 52px; }
.symbol div + div label:first-child { width: 167px; }
.symbol .field { width: 70px; }
.description { height: 116px; padding: 5px 8px; }
.actions { display: flex; gap: 8px; padding-top: 14px; margin: 0 -8px 0 -2px; }
.actions .help { margin-left: auto; }
.dialog-status { display: flex; gap: 3px; height: 22px; }
.dialog-status span { flex: 1; border-top: 1px solid var(--mid); border-left: 1px solid var(--mid); }
.dialog-status span:first-child { flex: 0 0 42px; border-right: 1px solid #fff; }

/* status bar */
.status { height: 23px; flex: none; display: flex; gap: 2px; padding: 0 0 1px; border-bottom: 1px solid #c9dfea; font-size: 14px; }
.status span, .status button { border: solid; border-width: 2px 1px 0 2px; border-color: var(--dark) #fff #fff var(--dark); text-align: center; padding-top: 2px; white-space: nowrap; }
.status .grow { flex: 1; text-align: left; padding-left: 1px; }
.status button { width: 20px; padding: 0; border-width: 1px 2px 2px 1px; border-color: #fff #555 #555 #fff; }
.status .green { background: #0f0; }
.w52 { width: 52px; }
.w56 { width: 56px; }
.w64 { width: 64px; }
.w90 { width: 90px; }
.w126 { width: 126px; }
.w152 { width: 152px; }
.w164 { width: 164px; }

/* annotations */
.arrows { position: absolute; left: 0; top: 0; width: 100%; height: 100%; fill: var(--red); pointer-events: none; }
.note { position: absolute; display: flex; align-items: flex-start; gap: 11px; color: #fff; font: 20px/24px "Noto Sans CJK SC", sans-serif; }
.note b { width: 26px; height: 26px; margin-top: 8px; border-radius: 50%; background: var(--red); text-align: center; font: 16px/24px "Noto Sans", sans-serif; }
.note span { position: relative; min-height: 43px; padding: 9px 12px 8px 8px; border-radius: 3px; background: rgba(0, 0, 0, .6); }
.note span::before { content: ""; position: absolute; left: -5px; top: 16px; border: 5px solid transparent; border-right-color: rgba(0, 0, 0, .6); border-left: 0; }
.one { left: 1210px; top: 155px; }
.two { left: 883px; top: 216px; }
.three { left: 783px; top: 683px; }
.three span { width: 93px; height: 70px; }
.credit { position: absolute; right: 16px; bottom: 8px; font: 14px/16px Roboto, sans-serif; color: rgba(255, 255, 255, .8); text-shadow: 0 0 1px #555, 1px 1px #777; }
```
